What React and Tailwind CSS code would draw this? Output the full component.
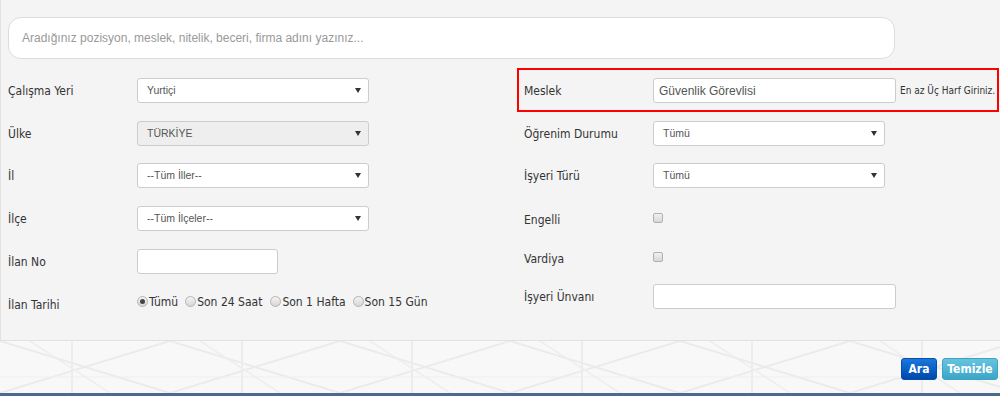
import React from "react";

const LBL = "font-['DejaVu_Sans_Condensed','DejaVu_Sans',sans-serif] text-[12px] text-[#333]";
const CTRL = "font-['Liberation_Sans',Arial,sans-serif]";

function Select({ value, w = "w-[232px]", disabled = false }) {
  return (
    <div
      className={`${w} h-[25px] flex items-center justify-between pl-[9px] pr-[7px] border border-[#ccc] rounded-[3px] ${
        disabled ? "bg-[#eeeeee]" : "bg-white"
      } ${CTRL} text-[10.5px] text-[#555]`}
    >
      <span>{value}</span>
      <span className="w-0 h-0 border-l-[3px] border-r-[3px] border-t-[5px] border-l-transparent border-r-transparent border-t-[#333]" />
    </div>
  );
}

function TextInput({ w, value = "" }) {
  return (
    <div
      className={`${w} h-[25px] flex items-center pl-[5px] border border-[#ccc] rounded-[3px] bg-white ${CTRL} text-[12px] text-[#555]`}
    >
      {value}
    </div>
  );
}

function Radio({ checked, label, ml = "" }) {
  return (
    <div className={`flex items-center ${ml}`}>
      <span className="w-[11px] h-[11px] rounded-full border border-[#b4b4b4] bg-gradient-to-b from-[#f4f4f4] to-[#d6d6d6] flex items-center justify-center">
        {checked && <span className="w-[5px] h-[5px] rounded-full bg-[#444]" />}
      </span>
      <span className={`${LBL} ml-[1px]`}>{label}</span>
    </div>
  );
}

function Check() {
  return (
    <span className="block w-[10px] h-[10px] rounded-[2px] border border-[#b0b0b0] bg-gradient-to-b from-[#f0f0f0] to-[#d8d8d8]" />
  );
}

function LeftRow({ label, children, mt, labelPt = "" }) {
  return (
    <div className={`flex items-center h-[25px] ${mt}`}>
      <div className={`w-[129px] ${LBL} ${labelPt}`}>{label}</div>
      {children}
    </div>
  );
}

export default function App() {
  return (
    <div className="w-[1000px] h-[396px] flex flex-col bg-[#f8f8f8] overflow-hidden">
      <div className="h-[341px] bg-[#f4f4f4] border-l border-b border-[#e1e1e1] flex flex-col">
        <div className="mt-[17px] ml-[7px] w-[887px] h-[42px] bg-white border border-[#dcdcdc] rounded-[13px] flex items-center pl-[13px] font-['Liberation_Sans',Arial,sans-serif] text-[12px] text-[#999]">
          Aradığınız pozisyon, meslek, nitelik, beceri, firma adını yazınız...
        </div>

        <div className="flex mt-[9px]">
          {/* left column */}
          <div className="w-[516px] pl-[7px] pt-[10px] flex flex-col">
            <LeftRow label="Çalışma Yeri" mt="" labelPt="pt-[1px]">
              <Select value="Yurtiçi" />
            </LeftRow>
            <LeftRow label="Ülke" mt="mt-[18px]" labelPt="pt-[1px]">
              <Select value="TÜRKİYE" disabled />
            </LeftRow>
            <LeftRow label="İl" mt="mt-[17px]" labelPt="pt-[1px]">
              <Select value="--Tüm İller--" />
            </LeftRow>
            <LeftRow label="İlçe" mt="mt-[18px]" labelPt="pt-[1px]">
              <Select value="--Tüm İlçeler--" />
            </LeftRow>
            <LeftRow label="İlan No" mt="mt-[18px]" labelPt="pt-[1px]">
              <TextInput w="w-[141px]" />
            </LeftRow>
            <div className="flex items-center h-[25px] mt-[15px]">
              <div className={`w-[129px] ${LBL} pt-[6px]`}>İlan Tarihi</div>
              <Radio checked label="Tümü" />
              <Radio label="Son 24 Saat" ml="ml-[7px]" />
              <Radio label="Son 1 Hafta" ml="ml-[8px]" />
              <Radio label="Son 15 Gün" ml="ml-[7px]" />
            </div>
          </div>

          {/* right column */}
          <div className="w-[482px] flex flex-col">
            <div className="h-[44px] border-2 border-[#ff0000] pt-[8px] pl-[5px] flex items-start">
              <div className={`w-[129px] h-[25px] flex items-center pt-[1px] ${LBL}`}>Meslek</div>
              <TextInput w="w-[243px]" value="Güvenlik Görevlisi" />
              <div className="h-[25px] ml-[4px] flex items-center font-['DejaVu_Sans_Condensed','DejaVu_Sans',sans-serif] text-[10px] text-[#333]">
                En az Üç Harf Giriniz.
              </div>
            </div>
            <div className="pl-[7px] flex flex-col">
              <LeftRow label="Öğrenim Durumu" mt="mt-[9px]" labelPt="pt-[1px]">
                <Select value="Tümü" />
              </LeftRow>
              <LeftRow label="İşyeri Türü" mt="mt-[17px]" labelPt="pt-[1px]">
                <Select value="Tümü" />
              </LeftRow>
              <div className="flex items-center h-[16px] mt-[22px]">
                <div className={`w-[129px] ${LBL} pt-[4px]`}>Engelli</div>
                <Check />
              </div>
              <div className="flex items-center h-[16px] mt-[23px]">
                <div className={`w-[129px] ${LBL} pt-[4px]`}>Vardiya</div>
                <Check />
              </div>
              <LeftRow label="İşyeri Ünvanı" mt="mt-[19px]" labelPt="pt-[1px]">
                <TextInput w="w-[243px]" />
              </LeftRow>
            </div>
          </div>
        </div>
      </div>

      <div className="relative h-[52px] flex justify-end items-start pt-[17px] pr-[2px] gap-[5px]">
        <svg className="absolute inset-0" width="1000" height="52" aria-hidden="true">
          <defs>
            <pattern id="bgp" width="170" height="52" patternUnits="userSpaceOnUse">
              <line x1="0" y1="0" x2="170" y2="52" stroke="#ebebeb" strokeWidth="2" />
              <line x1="170" y1="0" x2="0" y2="52" stroke="#ebebeb" strokeWidth="2" />
              <line x1="72" y1="0" x2="72" y2="52" stroke="#ececec" strokeWidth="2" />
              <line x1="0" y1="36" x2="170" y2="36" stroke="#efefef" strokeWidth="1" />
              <line x1="30" y1="0" x2="110" y2="52" stroke="#eeeeee" strokeWidth="1.5" />
            </pattern>
          </defs>
          <rect width="1000" height="52" fill="url(#bgp)" />
        </svg>
        <button className="relative w-[36px] h-[22px] rounded-[3px] border border-[#0a4ea6] bg-gradient-to-b from-[#1a78de] to-[#0048ac] text-white font-bold font-['DejaVu_Sans_Condensed','DejaVu_Sans',sans-serif] text-[12px]">
          Ara
        </button>
        <button className="relative w-[56px] h-[22px] rounded-[3px] border border-[#3ea2c2] bg-gradient-to-b from-[#66c4df] to-[#3aa6c8] text-white font-bold font-['DejaVu_Sans_Condensed','DejaVu_Sans',sans-serif] text-[12px]">
          Temizle
        </button>
      </div>
      <div className="h-[3px] bg-[#4c6a8d]" />
    </div>
  );
}
